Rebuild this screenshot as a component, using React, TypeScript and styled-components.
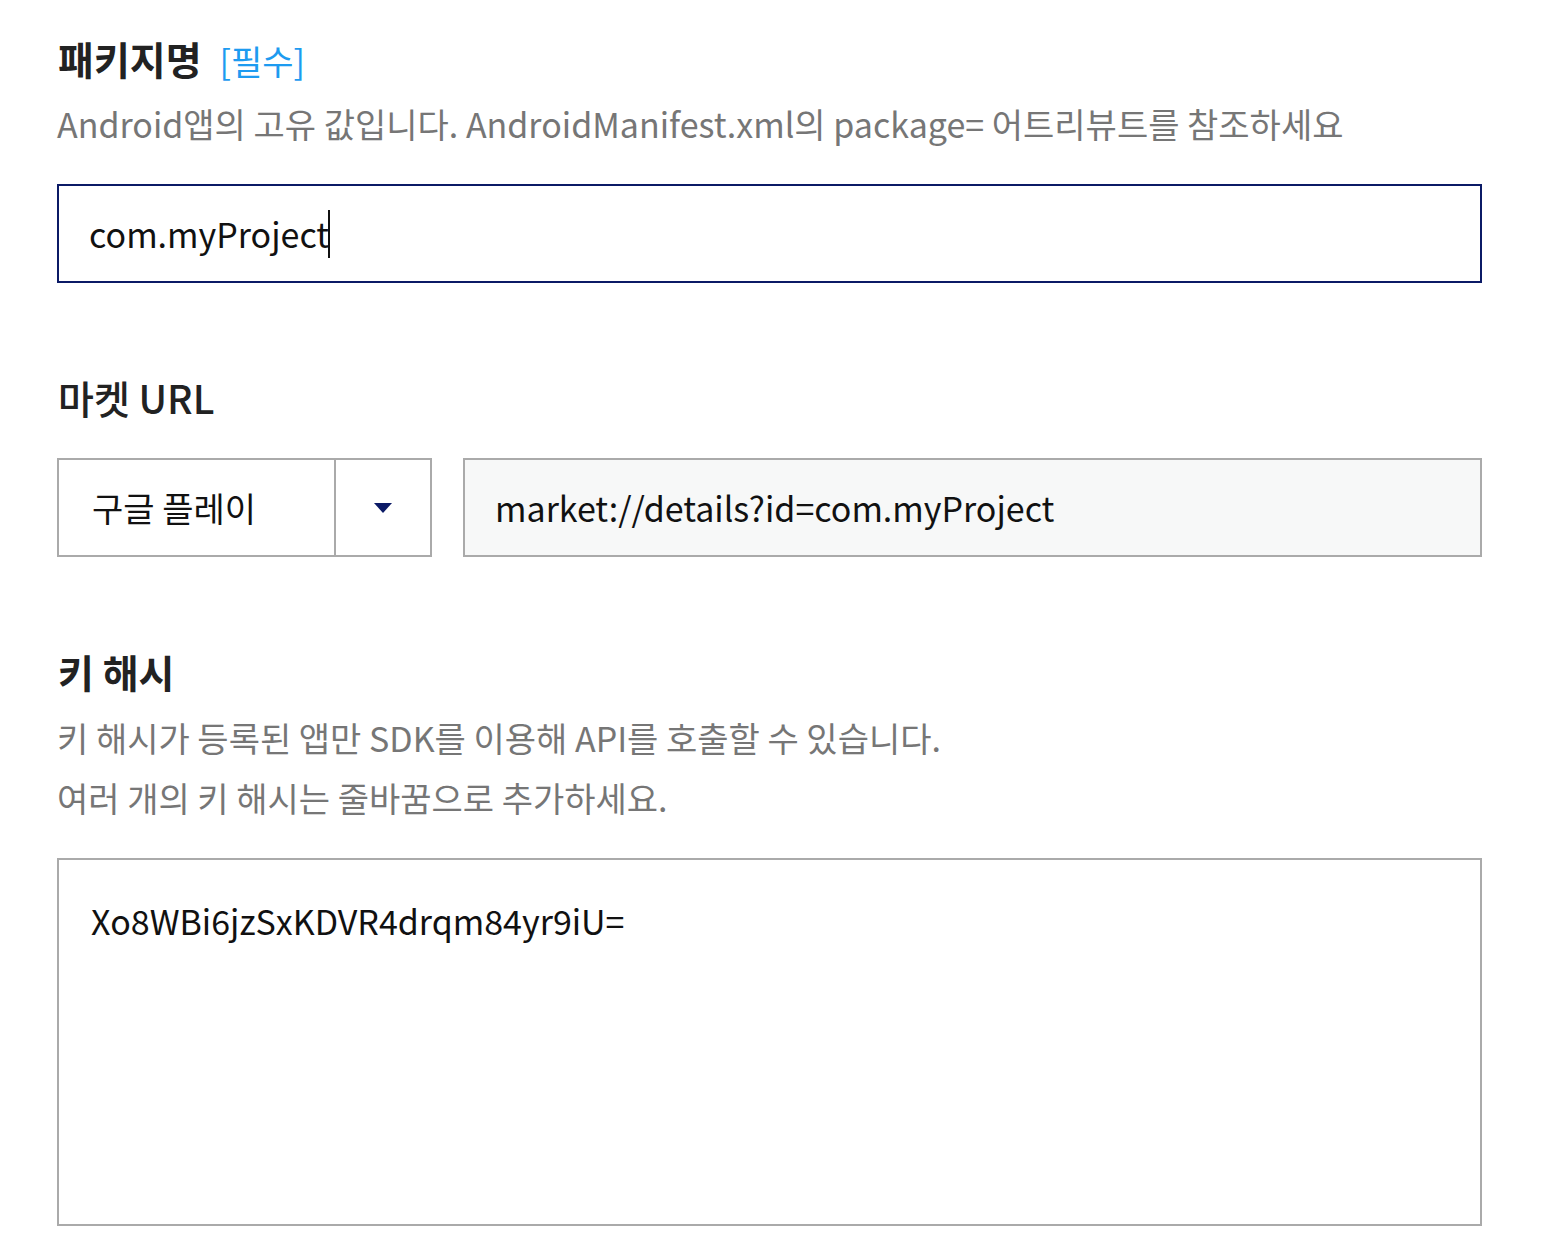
import styled, { createGlobalStyle } from "styled-components";

const GlobalStyle = createGlobalStyle`
    html, body {
        margin: 0;
        padding: 0;
        background: #fff;
    }
    body {
        font-family: "Noto Sans CJK KR", "Noto Sans", sans-serif;
        color: #222;
    }
`

const Page = styled.div`
    padding: 33px 62px 0 57px;
    display: flex;
    flex-direction: column;
`

const Section = styled.section<{ $first?: boolean }>`
    display: flex;
    flex-direction: column;
    margin-top: ${(p) => (p.$first ? "0" : "89px")};
`

const Label = styled.h2<{ $weight?: number }>`
    margin: 0;
    height: 50px;
    font-size: 39px;
    line-height: 50px;
    font-weight: ${(p) => p.$weight ?? 700};
    color: #222;
    padding-left: 1px;
`

const Required = styled.span`
    margin-left: 18px;
    font-size: 34px;
    line-height: 1;
    color: #1d9bf0;
    font-weight: 400;
`

const Desc = styled.p<{ $gap?: number }>`
    margin: ${(p) => p.$gap ?? 11}px 0 30px;
    font-size: 34px;
    line-height: 60px;
    color: #767676;
`

const TextField = styled.div`
    box-sizing: border-box;
    height: 99px;
    border: 2px solid #0b1a66;
    display: flex;
    align-items: center;
    padding: 0 30px;
    font-size: 34px;
    color: #111;
`

const Caret = styled.span`
    display: inline-block;
    width: 2px;
    height: 48px;
    background: #111;
    margin-left: -1px;
`

const Row = styled.div`
    display: flex;
    gap: 31px;
    margin-top: 36px;
`

const Select = styled.div`
    box-sizing: border-box;
    width: 375px;
    height: 99px;
    border: 2px solid #aaa;
    display: flex;
    flex-shrink: 0;
`

const SelectValue = styled.div`
    flex: 1;
    display: flex;
    align-items: center;
    padding-left: 33px;
    font-size: 34px;
    color: #111;
`

const SelectArrow = styled.div`
    width: 94px;
    border-left: 2px solid #aaa;
    display: flex;
    align-items: center;
    justify-content: center;
`

const ReadOnlyField = styled.div`
    box-sizing: border-box;
    flex: 1;
    height: 99px;
    border: 2px solid #aaa;
    background: #f7f8f8;
    display: flex;
    align-items: center;
    padding: 0 30px;
    font-size: 34px;
    color: #111;
`

const TextArea = styled.div`
    box-sizing: border-box;
    height: 368px;
    border: 2px solid #aaa;
    padding: 37px 32px;
    font-size: 34px;
    line-height: 48px;
    color: #111;
`

export default function App() {
    return (
        <>
            <GlobalStyle />
            <Page>
                <Section $first>
                    <Label>
                        패키지명<Required>[필수]</Required>
                    </Label>
                    <Desc>
                        Android앱의 고유 값입니다. AndroidManifest.xml의 package= 어트리뷰트를 참조하세요
                    </Desc>
                    <TextField>
                        com.myProject<Caret />
                    </TextField>
                </Section>

                <Section>
                    <Label $weight={500}>마켓 URL</Label>
                    <Row>
                        <Select>
                            <SelectValue>구글 플레이</SelectValue>
                            <SelectArrow>
                                <svg width="18" height="10" viewBox="0 0 18 10">
                                    <path d="M0 0 L18 0 L9 10 Z" fill="#0b1a66" />
                                </svg>
                            </SelectArrow>
                        </Select>
                        <ReadOnlyField>market://details?id=com.myProject</ReadOnlyField>
                    </Row>
                </Section>

                <Section>
                    <Label>키 해시</Label>
                    <Desc $gap={12}>
                        키 해시가 등록된 앱만 SDK를 이용해 API를 호출할 수 있습니다.
                        <br />
                        여러 개의 키 해시는 줄바꿈으로 추가하세요.
                    </Desc>
                    <TextArea>Xo8WBi6jzSxKDVR4drqm84yr9iU=</TextArea>
                </Section>
            </Page>
        </>
    )
}
